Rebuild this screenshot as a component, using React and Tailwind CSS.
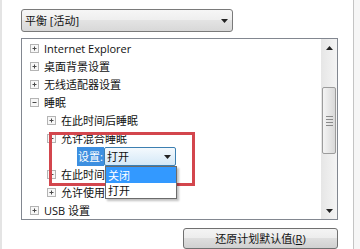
const Expander = ({ open }) => (
  <svg width="9" height="9" viewBox="0 0 9 9" className="shrink-0">
    <rect x="0.5" y="0.5" width="8" height="8" fill="#f7f7f7" stroke="#b4b4b4" />
    <path d="M2.5 4.5h4" stroke="#4a4a4a" />
    {!open && <path d="M4.5 2.5v4" stroke="#4a4a4a" />}
  </svg>
);

const Arrow = ({ up }) => (
  <svg width="7" height="4" viewBox="0 0 7 4">
    <path d={up ? 'M0 4L3.5 0L7 4Z' : 'M0 0L7 0L3.5 4Z'} fill="#222" />
  </svg>
);

const Row = ({ level, open, children }) => (
  <div className={`flex h-[18px] items-center ${level === 0 ? 'pl-[8px]' : 'pl-[25px]'}`}>
    <Expander open={open} />
    <span className="ml-[5px] whitespace-nowrap leading-none">{children}</span>
  </div>
);

const ScrollBar = () => (
  <div className="flex w-[16px] shrink-0 flex-col bg-linear-to-r from-[#e6e6e6] to-[#f4f4f4]">
    <div className="flex h-[17px] items-center justify-center">
      <Arrow up />
    </div>
    <div className="h-[31px]" />
    <div className="mx-[1px] flex h-[67px] flex-col items-center justify-center gap-[2px] rounded-[2px] border border-[#9c9c9c] bg-linear-to-r from-[#f4f4f4] to-[#d9d9d9]">
      <div className="h-px w-[7px] bg-[#8a8a8a]" />
      <div className="h-px w-[7px] bg-[#8a8a8a]" />
      <div className="h-px w-[7px] bg-[#8a8a8a]" />
      <div className="h-px w-[7px] bg-[#8a8a8a]" />
    </div>
    <div className="flex-1" />
    <div className="flex h-[17px] items-center justify-center">
      <Arrow />
    </div>
  </div>
);

export default function App() {
  return (
    <div className="flex h-[249px] w-[360px] overflow-hidden bg-white text-[11px] text-[#111] font-['Open_Sans','Noto_Sans_CJK_SC',sans-serif]">
      <div className="w-[2px] shrink-0 bg-[#e4e4e4]" />

      <div className="flex w-[351px] shrink-0 flex-col pl-[19px] pr-[15px] pt-[9px]">
        <div className="flex h-[23px] w-[212px] items-center justify-between rounded-[3px] border border-[#7a7a7a] bg-[linear-gradient(#f6f6f6_0%,#eeeeee_50%,#e3e3e3_50%,#d8d8d8_100%)] pl-[3px] pr-[4px]">
          <span className="leading-none">平衡 [活动]</span>
          <Arrow />
        </div>

        <div className="relative mt-[6px] flex h-[182px] w-[317px] border border-[#828790] bg-white">
          <div className="flex-1 overflow-hidden">
            <Row level={0}>Internet Explorer</Row>
            <Row level={0}>桌面背景设置</Row>
            <Row level={0}>无线适配器设置</Row>
            <Row level={0} open>睡眠</Row>
            <Row level={1}>在此时间后睡眠</Row>
            <Row level={1} open>允许混合睡眠</Row>
            <div className="flex h-[18px] items-start pl-[55px]">
              <span className="flex h-[19px] items-center bg-[#3d8fe0] px-[1px] leading-none text-white">设置:</span>
              <div className="relative h-[19px] w-[72px]">
                <div className="flex h-full items-center justify-between rounded-[2px] border border-[#3c7fb1] bg-linear-to-b from-[#f4f9fd] to-[#d4e8f7] pl-[2px] pr-[4px]">
                  <span className="leading-none">打开</span>
                  <Arrow />
                </div>
                <div className="absolute left-[1px] top-[19px] z-10 w-[72px] border border-[#6b6b6b] bg-white shadow-[2px_2px_2px_rgba(0,0,0,0.25)]">
                  <div className="flex h-[16px] items-center bg-[#3399ff] pl-[2px] leading-none text-white">关闭</div>
                  <div className="flex h-[15px] items-center pl-[2px] leading-none">打开</div>
                </div>
              </div>
            </div>
            <Row level={1}>在此时间</Row>
            <Row level={1}>允许使用</Row>
            <Row level={0}>USB 设置</Row>
          </div>
          <ScrollBar />

          <div className="absolute left-[27px] top-[93px] h-[54px] w-[146px] border-[3px] border-[#d3464d]" />
        </div>

        <button className="mt-[8px] flex h-[21px] w-[155px] shrink-0 items-center justify-center self-end rounded-[3px] border border-[#707070] bg-[linear-gradient(#f4f4f4_0%,#ececec_50%,#dedede_50%,#d0d0d0_100%)] leading-none">
          还原计划默认值(<span className="underline">R</span>)
        </button>
      </div>

      <div className="w-px shrink-0 bg-[#c4c4c4]" />
      <div className="flex-1 bg-[#f6f6f6]" />
    </div>
  );
}
